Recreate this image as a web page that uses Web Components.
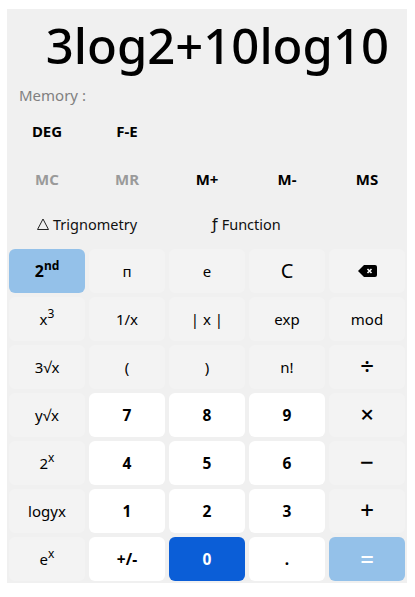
<!DOCTYPE html>
<html>
<head>
<meta charset="utf-8">
<style>
  html, body { margin: 0; background: #fff; }
  body { font-family: "Noto Sans", "Open Sans", sans-serif; }
</style>
</head>
<body>
<calc-app></calc-app>

<script>
class CalcKey extends HTMLElement {
  connectedCallback() {
    this.attachShadow({ mode: "open" });
    this.shadowRoot.innerHTML = `
      <style>
        :host {
          display: flex;
          align-items: center;
          justify-content: center;
          height: 44px;
          border-radius: 6px;
          font-size: 15px;
          color: #000;
          background: #f3f3f3;
          padding-bottom: 1px;
          box-sizing: border-box;
        }
        :host([kind="num"]) { background: #fff; font-weight: 700; font-size: 15.5px; }
        :host([kind="accent"]) { background: #94c1e9; font-weight: 700; font-size: 16px; }
        :host([kind="primary"]) { background: #0b5ed7; color: #fff; font-weight: 700; font-size: 15.5px; }
        :host([kind="equals"]) { background: #94c1e9; color: #fff; font-size: 24px; font-weight: 500; }
        :host([kind="op"]) { font-size: 24px; font-weight: 500; padding-bottom: 3px; }
        ::slotted(sup) { font-size: 12px; line-height: 0; position: relative; top: -5px; }
      </style>
      <slot></slot>
    `;
  }
}

class CalcTool extends HTMLElement {
  connectedCallback() {
    this.attachShadow({ mode: "open" });
    this.shadowRoot.innerHTML = `
      <style>
        :host {
          display: flex;
          align-items: center;
          justify-content: center;
          height: 44px;
          padding-bottom: 2px;
          box-sizing: border-box;
          font-size: 15px;
          font-weight: 700;
          color: #000;
        }
        :host([off]) { color: #9a9a9a; }
      </style>
      <slot></slot>
    `;
  }
}

class CalcDisplay extends HTMLElement {
  connectedCallback() {
    this.attachShadow({ mode: "open" });
    this.shadowRoot.innerHTML = `
      <style>
        :host {
          display: block;
          text-align: right;
          height: 73px;
          padding-right: 16px;
          font-size: 49px;
          font-weight: 500;
          line-height: 73px;
          color: #000;
          white-space: nowrap;
        }
      </style>
      <slot></slot>
    `;
  }
}

class CalcApp extends HTMLElement {
  connectedCallback() {
    this.attachShadow({ mode: "open" });
    this.shadowRoot.innerHTML = `
      <style>
        :host { display: block; padding: 9px 8px 14px 7px; }
        .panel { background: #f0f0f0; width: 400px; height: 574px; padding: 0 2px; box-sizing: border-box; }
        .memory { font-size: 15px; color: #808080; padding-left: 10px; height: 20px; line-height: 20px; margin-top: 3px; }
        .row { display: grid; grid-template-columns: repeat(5, 76px); column-gap: 4px; }
        .row.top { margin-top: 5px; }
        .row.mem { margin-top: 4px; }
        .modes { display: flex; height: 47px; align-items: center; font-size: 14.5px; color: #111; padding-bottom: 3px; box-sizing: border-box; }
        .modes span { display: flex; align-items: center; gap: 4px; }
        .modes .trig { margin-left: 28px; width: 175px; }
        .modes i { font-family: "DejaVu Sans", sans-serif; font-style: normal; font-size: 16px; }
        .keys { display: grid; grid-template-columns: repeat(5, 76px); grid-auto-rows: 44px; gap: 4px; }
        svg { display: block; }
      </style>
      <div class="panel">
        <calc-display>3log2+10log10</calc-display>
        <div class="memory">Memory :</div>
        <div class="row top">
          <calc-tool>DEG</calc-tool><calc-tool>F-E</calc-tool>
        </div>
        <div class="row mem">
          <calc-tool off>MC</calc-tool><calc-tool off>MR</calc-tool>
          <calc-tool>M+</calc-tool><calc-tool>M-</calc-tool><calc-tool>MS</calc-tool>
        </div>
        <div class="modes">
          <span class="trig"><svg width="12" height="12" viewBox="0 0 12 12"><path d="M6 1 11.5 11.5H.5Z" fill="none" stroke="#222" stroke-width="1"/></svg>Trignometry</span>
          <span><i>ƒ</i>Function</span>
        </div>
        <div class="keys">
          <calc-key kind="accent">2<sup>nd</sup></calc-key>
          <calc-key>п</calc-key>
          <calc-key>e</calc-key>
          <calc-key style="font-size:20px">C</calc-key>
          <calc-key><svg width="19" height="12" viewBox="0 0 19 12"><path d="M6 0H17a2 2 0 0 1 2 2V10a2 2 0 0 1-2 2H6L0 6Z" fill="#000"/><path d="M9.5 4l4 4M13.5 4l-4 4" stroke="#fff" stroke-width="1.6"/></svg></calc-key>

          <calc-key>x<sup>3</sup></calc-key>
          <calc-key>1/x</calc-key>
          <calc-key>|&nbsp;x&nbsp;|</calc-key>
          <calc-key>exp</calc-key>
          <calc-key>mod</calc-key>

          <calc-key>3√x</calc-key>
          <calc-key>(</calc-key>
          <calc-key>)</calc-key>
          <calc-key>n!</calc-key>
          <calc-key kind="op">÷</calc-key>

          <calc-key>y√x</calc-key>
          <calc-key kind="num">7</calc-key>
          <calc-key kind="num">8</calc-key>
          <calc-key kind="num">9</calc-key>
          <calc-key kind="op">×</calc-key>

          <calc-key>2<sup>x</sup></calc-key>
          <calc-key kind="num">4</calc-key>
          <calc-key kind="num">5</calc-key>
          <calc-key kind="num">6</calc-key>
          <calc-key kind="op">−</calc-key>

          <calc-key>logyx</calc-key>
          <calc-key kind="num">1</calc-key>
          <calc-key kind="num">2</calc-key>
          <calc-key kind="num">3</calc-key>
          <calc-key kind="op">+</calc-key>

          <calc-key>e<sup>x</sup></calc-key>
          <calc-key kind="num">+/-</calc-key>
          <calc-key kind="primary">0</calc-key>
          <calc-key kind="num">.</calc-key>
          <calc-key kind="equals">=</calc-key>
        </div>
      </div>
    `;
  }
}

customElements.define("calc-key", CalcKey);
customElements.define("calc-tool", CalcTool);
customElements.define("calc-display", CalcDisplay);
customElements.define("calc-app", CalcApp);
</script>
</body>
</html>
